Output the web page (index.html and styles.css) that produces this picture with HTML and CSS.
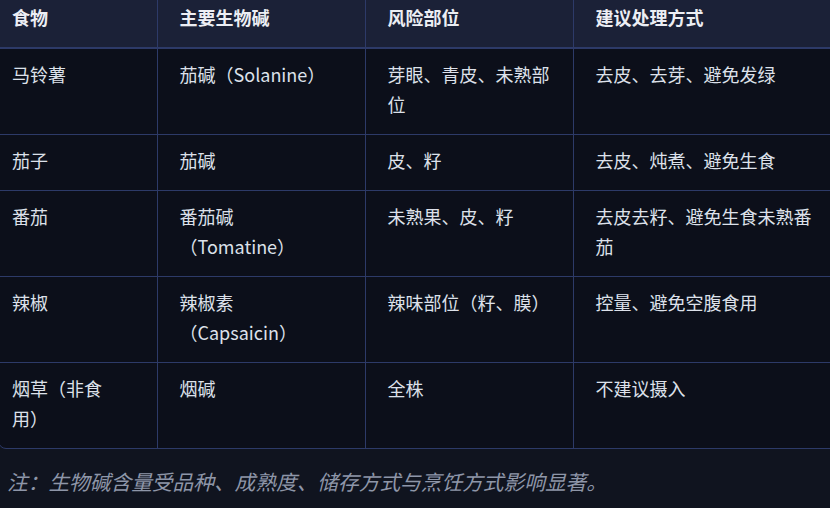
FILE: index.html
```html
<!DOCTYPE html>
<html lang="zh-CN">
<head>
<meta charset="utf-8">
<link rel="stylesheet" href="styles.css">
</head>
<body>
<div class="table-wrap">
  <table class="alk-table">
    <colgroup>
      <col class="w1">
      <col class="w2">
      <col class="w2">
      <col class="w4">
    </colgroup>
    <thead>
      <tr>
        <th class="c1">食物</th>
        <th class="c2">主要生物碱</th>
        <th>风险部位</th>
        <th>建议处理方式</th>
      </tr>
    </thead>
    <tbody>
      <tr>
        <td class="c1">马铃薯</td>
        <td class="c2">茄碱（Solanine）</td>
        <td>芽眼、青皮、未熟部位</td>
        <td>去皮、去芽、避免发绿</td>
      </tr>
      <tr>
        <td class="c1">茄子</td>
        <td class="c2">茄碱</td>
        <td>皮、籽</td>
        <td>去皮、炖煮、避免生食</td>
      </tr>
      <tr>
        <td class="c1">番茄</td>
        <td class="c2">番茄碱（Tomatine）</td>
        <td>未熟果、皮、籽</td>
        <td>去皮去籽、避免生食未熟番茄</td>
      </tr>
      <tr>
        <td class="c1">辣椒</td>
        <td class="c2">辣椒素（Capsaicin）</td>
        <td>辣味部位（籽、膜）</td>
        <td>控量、避免空腹食用</td>
      </tr>
      <tr>
        <td class="c1">烟草（非食用）</td>
        <td class="c2">烟碱</td>
        <td>全株</td>
        <td>不建议摄入</td>
      </tr>
    </tbody>
  </table>
</div>
<p class="note">注：生物碱含量受品种、成熟度、储存方式与烹饪方式影响显著。</p>
</body>
</html>
```
FILE: styles.css
```css
html, body {
  margin: 0;
  padding: 0;
  background: #10141f;
  font-family: "Noto Sans CJK SC", "Noto Sans", sans-serif;
  color: #e3e6ee;
  overflow: hidden;
  text-spacing-trim: space-all;
}

.table-wrap {
  margin: -9px 0 0 -2px;
  width: 846px;
  border: 1px solid #2d3a68;
  border-radius: 8px;
  overflow: hidden;
  background: #0c0f1a;
}

.alk-table {
  border-collapse: collapse;
  table-layout: fixed;
  width: 844px;
  font-size: 18px;
  line-height: 30px;
}

.w1 { width: 158px; }
.w2 { width: 208px; }
.w4 { width: 270px; }

.alk-table th,
.alk-table td {
  box-sizing: border-box;
  padding: 10px 22px 15px 22px;
  text-align: left;
  vertical-align: top;
  border-left: 1px solid #2d3a68;
  border-top: 1px solid #2d3a68;
}

.alk-table th {
  background: #1b2137;
  font-weight: 700;
  color: #eceef4;
  border-top: none;
}

.alk-table .c1 {
  padding-left: 13px;
  padding-right: 40px;
  border-left: none;
}

.alk-table .c2 {
  padding-right: 30px;
}

.alk-table td {
  font-weight: 400;
  color: #dde1ea;
}

.alk-table thead tr th {
  border-bottom: 2px solid #2d3a68;
}

.note {
  margin: 17px 0 0 7px;
  font-size: 20.7px;
  line-height: 30px;
  font-style: italic;
  color: #8e96a8;
}
```
